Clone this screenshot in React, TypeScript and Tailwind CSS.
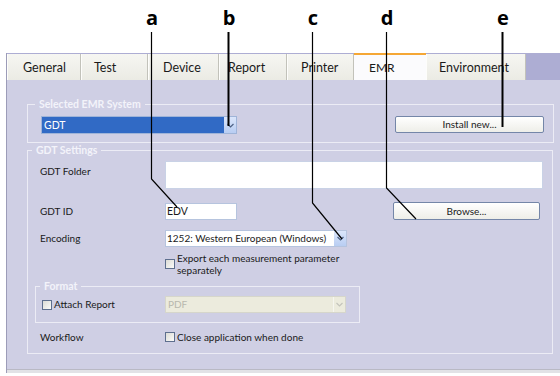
import React from 'react';

const tabs = [
  { label: 'General', w: 'w-[74px]', pl: 'pl-[15px]' },
  { label: 'Test', w: 'w-[67px]', pl: 'pl-[12px]' },
  { label: 'Device', w: 'w-[71px]', pl: 'pl-[14px]' },
  { label: 'Report', w: 'w-[68px]', pl: 'pl-[8px]' },
  { label: 'Printer', w: 'w-[67px]', pl: 'pl-[13px]' },
  { label: 'EMR', w: 'w-[72px]', pl: 'pl-[15px]', active: true },
  { label: 'Environment', w: 'w-[100px]', pl: 'pl-[12px]' },
];

function Chevron({ disabled }: { disabled?: boolean }) {
  return (
    <svg width="7" height="5" viewBox="0 0 7 5">
      <path d="M0.5 1 L3.5 4 L6.5 1" fill="none" stroke={disabled ? '#c4c4bc' : '#4d6185'} strokeWidth="1.2" />
    </svg>
  );
}

function Checkbox() {
  return <span className="inline-block w-[10px] h-[10px] border border-[#5e6f8e] bg-gradient-to-br from-[#dcdcd6] to-[#fbfbf9] shrink-0" />;
}

function Button({ label, className }: { label: string; className: string }) {
  return (
    <button
      className={`flex items-center justify-center rounded-[2px] border border-[#7486a8] bg-gradient-to-b from-[#ffffff] to-[#eeeee8] text-[10px] text-[#1a1a1a] ${className}`}
    >
      {label}
    </button>
  );
}

function GroupTitle({ label, left }: { label: string; left: string }) {
  return (
    <span className={`absolute -top-[8px] ${left} px-[4px] bg-[#cfcfe4] text-[10.5px] leading-[14px] font-bold text-[#f3f3fa] whitespace-nowrap`}>
      {label}
    </span>
  );
}

export default function App() {
  return (
    <div className="relative w-[560px] h-[376px] bg-white overflow-hidden font-['Lato','DejaVu_Sans',sans-serif] text-[#1a1a1a]">
      <div className="h-[53px]" />

      <div className="ml-[6px] h-[320px] flex flex-col border-l border-[#9c9cb8]">
        {/* tab strip */}
        <div className="flex items-end h-[27px] bg-[#adadd3]">
          {tabs.map((t) =>
            t.active ? (
              <div
                key={t.label}
                className={`${t.w} ${t.pl} h-[27px] flex items-center border-t-2 border-[#f5a735] bg-[#fbfbfd] text-[12px]`}
              >
                {t.label}
              </div>
            ) : (
              <div
                key={t.label}
                className={`${t.w} ${t.pl} h-[26px] flex items-center pt-[2px] border-l border-r border-l-[#fdfdfb] border-r-[#c2c2ba] bg-gradient-to-b from-[#f6f6f2] to-[#ebebe4] text-[12.5px]`}
              >
                {t.label}
              </div>
            )
          )}
        </div>

        {/* panel */}
        <div className="flex-1 bg-[#cfcfe4] pt-[24px] border-b border-[#b9b9c4] text-[10px]">
          {/* Selected EMR System */}
          <div className="relative ml-[20px] w-[527px] h-[39px] border border-[#ececf5] flex items-start justify-between pt-[11px] pl-[13px] pr-[9px]">
            <GroupTitle label="Selected EMR System" left="left-[7px]" />
            <div className="w-[196px] h-[18px] flex border border-[#9fb4d8] bg-[#316ac5]">
              <span className="flex-1 pl-[2px] text-[10.5px] leading-[16px] text-white">GDT</span>
              <span className="w-[12px] flex items-center justify-center bg-gradient-to-b from-[#dbe6fb] to-[#b8cdf2]">
                <Chevron />
              </span>
            </div>
            <Button label="Install new..." className="w-[149px] h-[17px]" />
          </div>

          {/* GDT Settings */}
          <div className="relative ml-[20px] mt-[7px] w-[526px] h-[204px] border border-[#ececf5] pt-[10px] pl-[12px]">
            <GroupTitle label="GDT Settings" left="left-[4px]" />

            <div className="flex h-[28px]">
              <span className="w-[125px] pt-[3px]">GDT Folder</span>
              <div className="w-[378px] h-[28px] bg-white border border-[#c9d2e6]" />
            </div>

            <div className="flex items-center h-[18px] mt-[13px]">
              <span className="w-[125px]">GDT ID</span>
              <div className="w-[72px] h-[17px] bg-white border border-[#b6c4de] text-[10.5px] leading-[15px] pl-[1px]">EDV</div>
              <Button label="Browse..." className="ml-[156px] w-[147px] h-[18px]" />
            </div>

            <div className="flex items-center h-[17px] mt-[10px]">
              <span className="w-[125px]">Encoding</span>
              <div className="w-[182px] h-[17px] flex bg-white border border-[#b6c4de]">
                <span className="flex-1 pl-[1px] leading-[15px] whitespace-nowrap overflow-hidden">1252: Western European (Windows)</span>
                <span className="w-[12px] flex items-center justify-center bg-gradient-to-b from-[#dbe6fb] to-[#b8cdf2]">
                  <Chevron />
                </span>
              </div>
            </div>

            <div className="flex items-center mt-[5px] ml-[125px] gap-[2px]">
              <Checkbox />
              <span className="leading-[12px]">
                Export each measurement parameter
                <br />
                separately
              </span>
            </div>

            {/* Format */}
            <div className="relative -ml-[5px] mt-[10px] w-[325px] h-[37px] border border-[#ececf5] pt-[9px] pl-[6px] flex items-start">
              <GroupTitle label="Format" left="left-[4px]" />
              <div className="w-[123px] h-[17px] flex items-center gap-[2px]">
                <Checkbox />
                <span>Attach Report</span>
              </div>
              <div className="w-[181px] h-[17px] flex bg-[#ecebdd] border border-[#d6d6cb]">
                <span className="flex-1 pl-[2px] leading-[15px] text-[#b8b8ae]">PDF</span>
                <span className="w-[12px] flex items-center justify-center border-l border-[#f6f6f0]">
                  <Chevron disabled />
                </span>
              </div>
            </div>

            <div className="flex items-center h-[14px] mt-[7px]">
              <span className="w-[125px]">Workflow</span>
              <Checkbox />
              <span className="ml-[2px]">Close application when done</span>
            </div>
          </div>
        </div>
        <div className="h-[3px] bg-[#e2e2e6]" />
      </div>

      {/* callout letters */}
      {[
        { l: 'a', x: 'left-[152px]' },
        { l: 'b', x: 'left-[229px]' },
        { l: 'c', x: 'left-[313px]' },
        { l: 'd', x: 'left-[387px]' },
        { l: 'e', x: 'left-[503px]' },
      ].map((c) => (
        <span
          key={c.l}
          className={`absolute top-[8px] ${c.x} -translate-x-1/2 text-[20px] leading-[20px] font-bold text-black font-['Open_Sans',sans-serif]`}
        >
          {c.l}
        </span>
      ))}

      {/* leader lines */}
      <svg className="absolute inset-0 pointer-events-none" width="560" height="376">
        <g fill="none" stroke="#000">
          <polyline points="151.5,32 151.5,179 177,207" strokeWidth="1.2" />
          <polyline points="228.5,32 228.5,126" strokeWidth="2" />
          <polyline points="312.5,32 312.5,203 342,239" strokeWidth="1.2" />
          <polyline points="386.5,32 386.5,188 416,219" strokeWidth="1.2" />
          <polyline points="502.5,32 502.5,127" strokeWidth="2" />
        </g>
      </svg>
    </div>
  );
}
